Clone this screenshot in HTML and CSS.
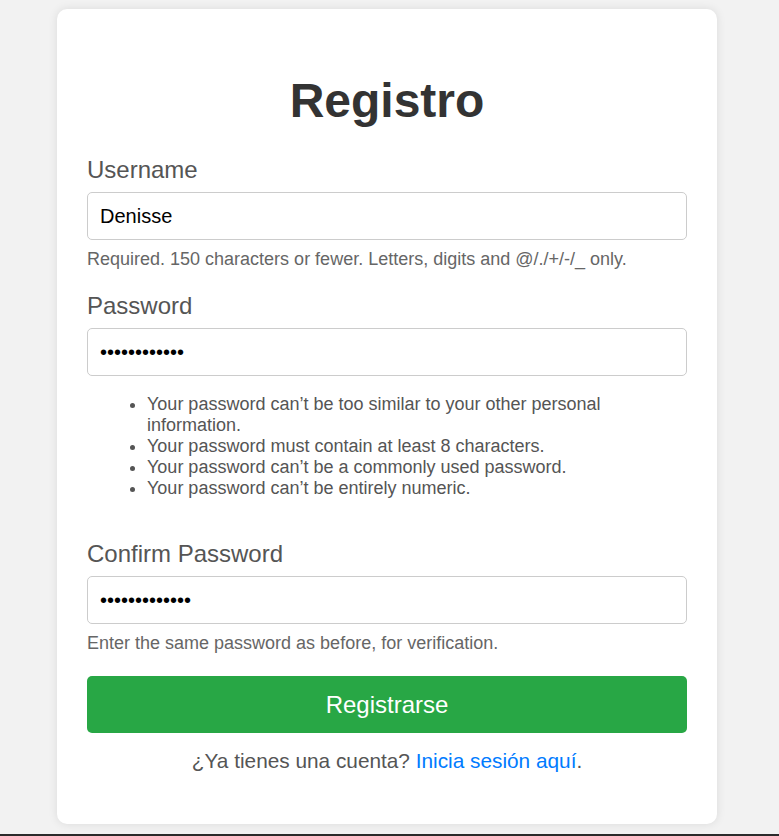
FILE: index.html
```html
<!DOCTYPE html>
<html lang="es">
<head>
<meta charset="utf-8">
<title>Registro</title>
<link rel="stylesheet" href="styles.css">
</head>
<body>
<div class="card">
  <h1 class="title">Registro</h1>
  <form class="form">
    <div class="field">
      <label class="label" for="u">Username</label>
      <input class="input" id="u" type="text" value="Denisse">
      <div class="help">Required. 150 characters or fewer. Letters, digits and @/./+/-/_ only.</div>
    </div>
    <div class="field">
      <label class="label" for="p1">Password</label>
      <input class="input" id="p1" type="password" value="abcdefghijkl">
      <ul class="rules">
        <li>Your password can’t be too similar to your other personal information.</li>
        <li>Your password must contain at least 8 characters.</li>
        <li>Your password can’t be a commonly used password.</li>
        <li>Your password can’t be entirely numeric.</li>
      </ul>
    </div>
    <div class="field">
      <label class="label" for="p2">Confirm Password</label>
      <input class="input" id="p2" type="password" value="abcdefghijklm">
      <div class="help">Enter the same password as before, for verification.</div>
    </div>
    <button class="btn" type="button">Registrarse</button>
  </form>
  <p class="login">¿Ya tienes una cuenta? <a class="link" href="#">Inicia sesión aquí</a>.</p>
</div>
</body>
</html>
```

FILE: styles.css
```css
html {
  background: #f2f2f2;
}
body {
  margin: 0;
  padding: 9px 5px 10px 0;
  background: #f2f2f2;
  border-bottom: 2px solid #2b2b2b;
  font-family: "Liberation Sans", Arial, sans-serif;
}
.card {
  width: 600px;
  margin: 0 auto;
  padding: 30px;
  background: #fff;
  border-radius: 10px;
  box-shadow: 0 0 10px rgba(0, 0, 0, 0.1);
}
.title {
  margin: 34px 0 28px;
  font-size: 48px;
  font-weight: bold;
  color: #333;
  text-align: center;
  line-height: normal;
}
.form {
  display: flex;
  flex-direction: column;
}
.field {
  display: flex;
  flex-direction: column;
  margin-bottom: 22px;
}
.label {
  font-size: 24px;
  color: #555;
  margin-bottom: 8px;
}
.input {
  box-sizing: border-box;
  width: 100%;
  height: 48px;
  margin: 0;
  padding: 12px;
  border: 1px solid #ccc;
  border-radius: 5px;
  font-family: "Liberation Sans", Arial, sans-serif;
  font-size: 20px;
  color: #000;
  background: #fff;
  outline: none;
}
.help {
  margin-top: 9px;
  font-size: 18px;
  color: #666;
}
.rules {
  margin: 18px 0 19px 20px;
  padding-left: 40px;
  font-size: 18px;
  color: #555;
}
.btn {
  margin: 0;
  padding: 15px 0 14px;
  border: none;
  border-radius: 5px;
  background: #28a745;
  color: #fff;
  font-family: "Liberation Sans", Arial, sans-serif;
  font-size: 24px;
  line-height: normal;
}
.login {
  margin: 16px 0 21px;
  text-align: center;
  font-size: 20.8px;
  color: #555;
}
.link {
  color: #007bff;
  text-decoration: none;
}
```
